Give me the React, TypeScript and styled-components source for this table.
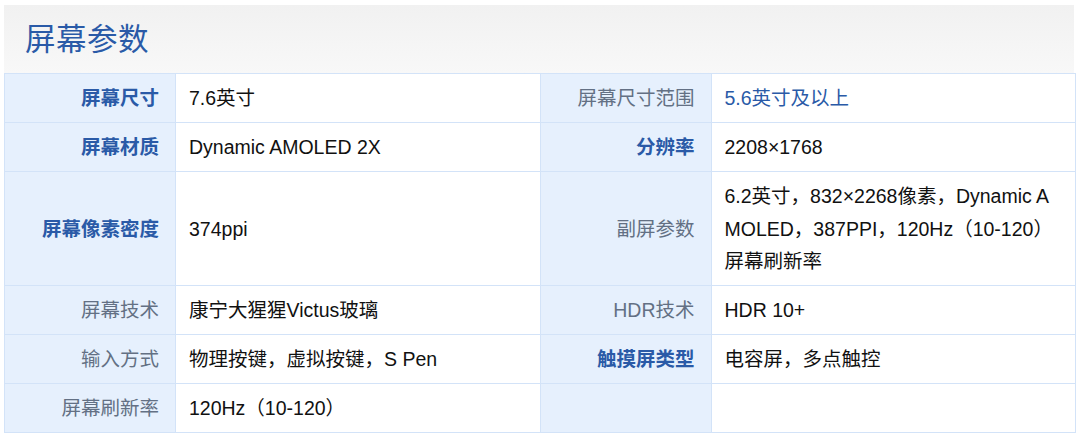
import styled, { createGlobalStyle } from "styled-components";

const GlobalStyle = createGlobalStyle`
  body {
    margin: 0;
    background: #ffffff;
    font-family: "Liberation Sans", "Noto Sans CJK SC", Arial, sans-serif;
  }
  * {
    box-sizing: border-box;
  }
`;

const Panel = styled.section`
  margin: 5px 4px 0 4px;
  width: 1072px;
`;

const Header = styled.div`
  height: 68px;
  margin-right: 2px;
  display: flex;
  align-items: center;
  padding: 0 0 4px 21px;
  background: linear-gradient(180deg, #f1f1f1 0%, #f8f8f8 100%);
`;

const Title = styled.h2`
  margin: 0;
  font-size: 30.5px;
  font-weight: 400;
  color: #2a5aa7;
  letter-spacing: 0.5px;
`;

const Grid = styled.div`
  display: grid;
  grid-template-columns: 170px 1fr 170px 1fr;
  gap: 1px;
  border: 1px solid #d3e3f8;
  background: #d3e3f8;
`;

const Label = styled.div<{ $strong?: boolean }>`
  display: flex;
  align-items: center;
  justify-content: flex-end;
  min-height: 48px;
  padding: 0 16px 0 8px;
  line-height: 32px;
  font-size: 19.5px;
  background: #e6f0fd;
  color: ${({ $strong }) => ($strong ? "#2a5aa7" : "#637084")};
  font-weight: ${({ $strong }) => ($strong ? 700 : 400)};
`;

const Value = styled.div<{ $link?: boolean }>`
  display: flex;
  align-items: center;
  min-height: 48px;
  padding: 8px 22px 7px 13px;
  line-height: 32.7px;
  font-size: 19.5px;
  background: #ffffff;
  color: ${({ $link }) => ($link ? "#2a5aa7" : "#111111")};
  word-break: break-all;
`;

type Cell = { label: string; value: string; strong?: boolean; link?: boolean };

const rows: [Cell, Cell | null][] = [
  [
    { label: "屏幕尺寸", value: "7.6英寸", strong: true },
    { label: "屏幕尺寸范围", value: "5.6英寸及以上", link: true },
  ],
  [
    { label: "屏幕材质", value: "Dynamic AMOLED 2X", strong: true },
    { label: "分辨率", value: "2208×1768", strong: true },
  ],
  [
    { label: "屏幕像素密度", value: "374ppi", strong: true },
    {
      label: "副屏参数",
      value: "6.2英寸，832×2268像素，Dynamic AMOLED，387PPI，120Hz（10-120）屏幕刷新率",
    },
  ],
  [
    { label: "屏幕技术", value: "康宁大猩猩Victus玻璃" },
    { label: "HDR技术", value: "HDR 10+" },
  ],
  [
    { label: "输入方式", value: "物理按键，虚拟按键，S Pen" },
    { label: "触摸屏类型", value: "电容屏，多点触控", strong: true },
  ],
  [{ label: "屏幕刷新率", value: "120Hz（10-120）" }, null],
];

export default function App() {
  return (
    <>
      <GlobalStyle />
      <Panel>
        <Header>
          <Title>屏幕参数</Title>
        </Header>
        <Grid>
          {rows.map((pair, i) =>
            pair.map((cell, j) => (
              <>
                <Label key={`l${i}${j}`} $strong={cell?.strong}>
                  {cell?.label}
                </Label>
                <Value key={`v${i}${j}`} $link={cell?.link}>
                  {cell?.value}
                </Value>
              </>
            ))
          )}
        </Grid>
      </Panel>
    </>
  );
}
